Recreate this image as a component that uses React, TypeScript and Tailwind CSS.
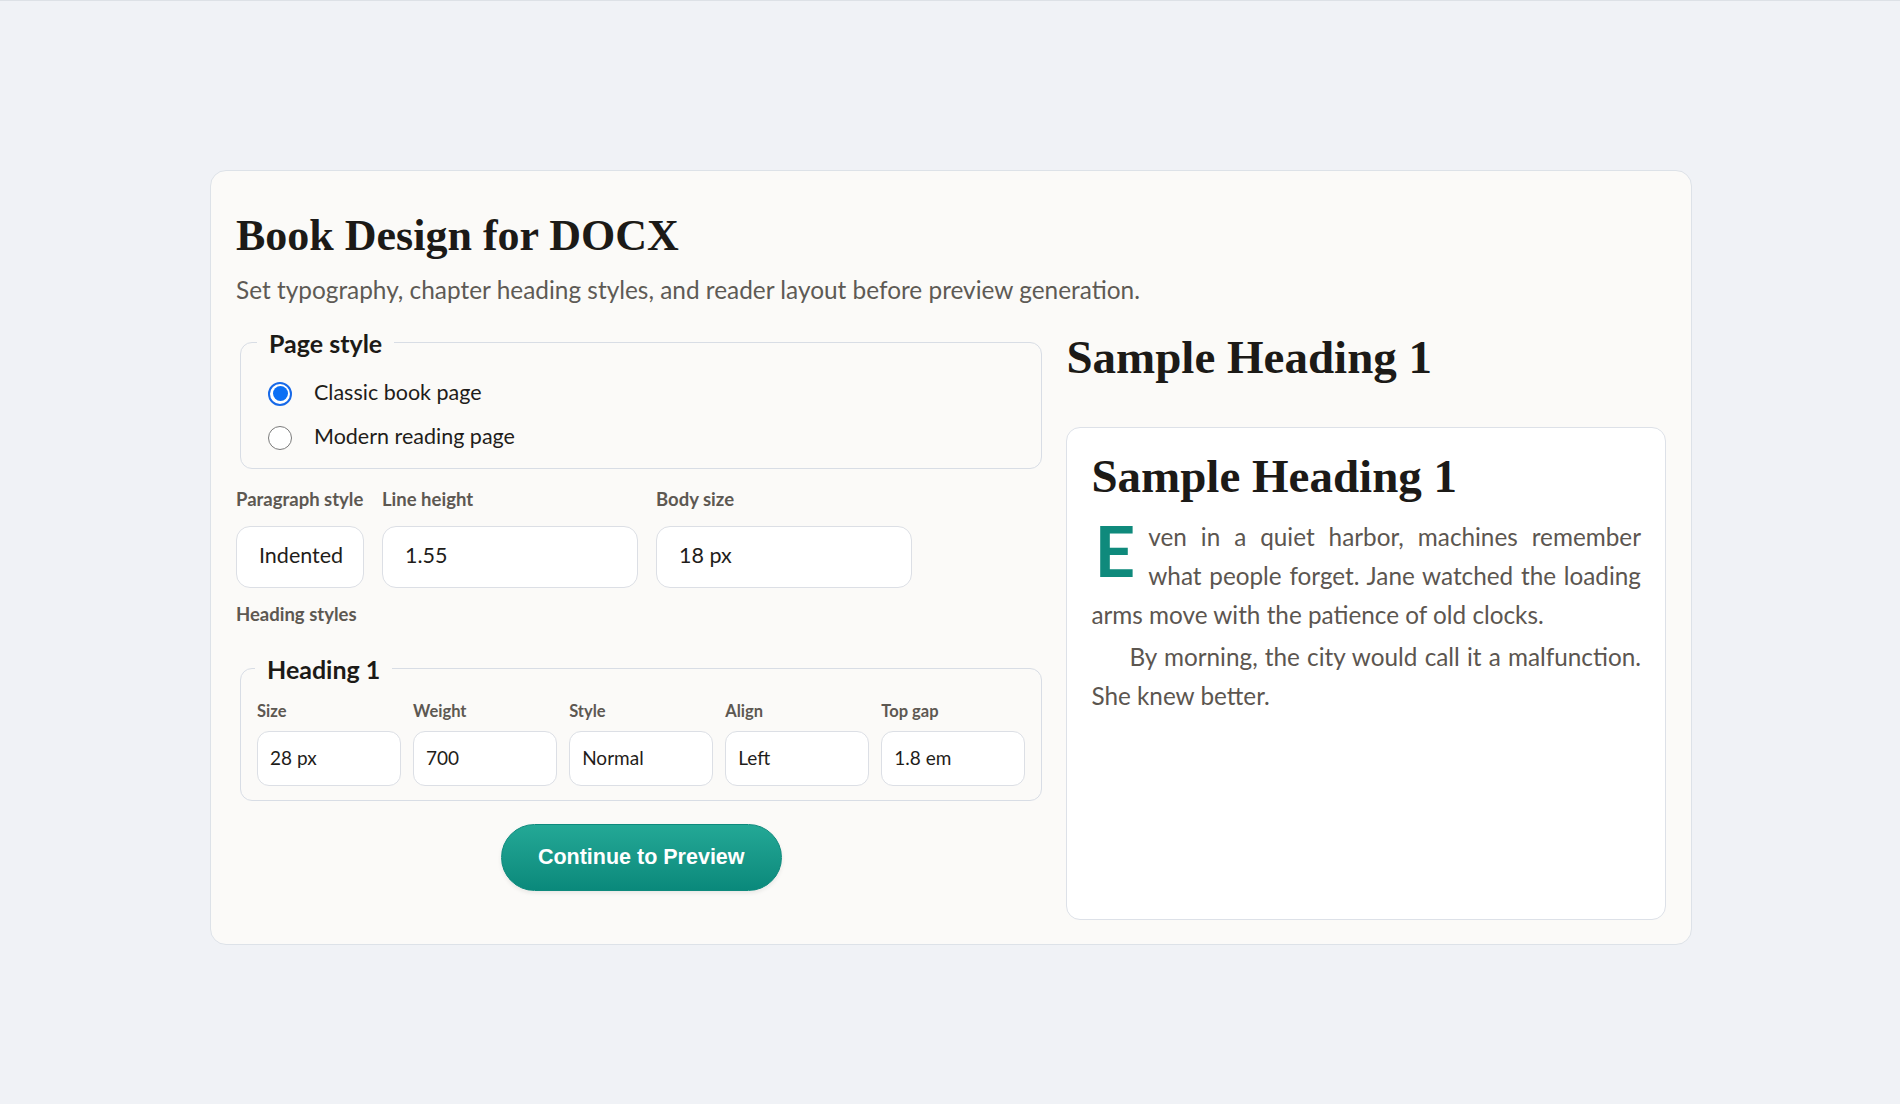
import React from "react";

const Radio = ({ checked, label }: { checked?: boolean; label: string }) => (
  <label className="flex items-center h-11 ml-[11px] gap-[22px] cursor-pointer">
    {checked ? (
      <span className="w-6 h-6 rounded-full border-2 border-[#1769e8] bg-white flex items-center justify-center">
        <span className="w-[15px] h-[15px] rounded-full bg-[#0b6ff4]" />
      </span>
    ) : (
      <span className="w-6 h-6 rounded-full border-[1.5px] border-[#7a7a7a] bg-white" />
    )}
    <span className="-mt-[3px] text-[21.5px] text-[#1f1d1a]">{label}</span>
  </label>
);

const Field = ({ label, value, big }: { label: string; value: string; big?: boolean }) => (
  <div className="flex flex-col">
    <span className={big ? "text-[18.5px] leading-6 font-bold text-[#5d5852]" : "text-[16.5px] leading-[22px] font-bold text-[#5d5852]"}>
      {label}
    </span>
    {big ? (
      <div className="mt-[15px] h-[62px] rounded-[14px] border border-[#dcdfe5] bg-white px-[22px] pb-[3px] flex items-center text-[21.5px] text-[#1f1d1a]">
        {value}
      </div>
    ) : (
      <div className="mt-[9px] h-[55px] rounded-[12px] border border-[#dcdfe5] bg-white px-3 flex items-center text-[19px] text-[#1f1d1a]">
        {value}
      </div>
    )}
  </div>
);

export default function App() {
  return (
    <div className="min-h-screen bg-[#f0f2f6] border-t border-[#dde1e6] pt-[169px] pl-0.5 font-['Lato','Noto_Sans',sans-serif]">
      <div className="mx-auto w-[1482px] rounded-[16px] border border-[#dde2e8] bg-[#fbfaf8] px-[25px] pt-[39px] pb-6">
        <h1 className="font-['Liberation_Serif',serif] font-bold text-[44px] leading-[1.2] text-[#1c1a17]">
          Book Design for DOCX
        </h1>
        <p className="mt-3 text-[24.4px] leading-[30px] text-[#5e5a55]">
          Set typography, chapter heading styles, and reader layout before preview generation.
        </p>

        <div className="mt-6 grid grid-cols-[1.345fr_1fr] gap-6">
          {/* settings */}
          <div className="flex flex-col">
            <fieldset className="ml-1 rounded-[12px] border border-[#d8dde5] px-4 pt-[15px] pb-2">
              <legend className="px-3 text-[25px] leading-7 font-bold text-[#1c1a17]">Page style</legend>
              <Radio checked label="Classic book page" />
              <Radio label="Modern reading page" />
            </fieldset>

            <div className="mt-[18px] grid grid-cols-[128px_256px_256px] gap-x-[18px]">
              <Field big label="Paragraph style" value="Indented" />
              <Field big label="Line height" value="1.55" />
              <Field big label="Body size" value="18 px" />
            </div>

            <span className="mt-[14px] text-[18.5px] leading-6 font-bold text-[#5d5852]">Heading styles</span>

            <fieldset className="ml-1 mt-[28px] rounded-[12px] border border-[#d8dde5] px-4 pt-4 pb-[14px]">
              <legend className="-ml-0.5 px-3 text-[25px] leading-[30px] font-bold text-[#1c1a17]">Heading 1</legend>
              <div className="grid grid-cols-5 gap-3">
                <Field label="Size" value="28 px" />
                <Field label="Weight" value="700" />
                <Field label="Style" value="Normal" />
                <Field label="Align" value="Left" />
                <Field label="Top gap" value="1.8 em" />
              </div>
            </fieldset>

            <div className="ml-1 mt-[23px] mb-[29px] flex justify-center">
              <button className="h-[67px] px-[36px] rounded-full border border-[#0e8a7d] bg-linear-to-b from-[#23a896] to-[#0a897b] text-white text-[21.5px] font-bold font-['Liberation_Sans',Arial,sans-serif] shadow-[0_2px_4px_rgba(0,0,0,0.08)]">
                Continue to Preview
              </button>
            </div>
          </div>

          {/* preview */}
          <div className="flex flex-col">
            <h2 className="font-['Liberation_Serif',serif] font-bold text-[47px] leading-[1.2] text-[#1c1a17]">
              Sample Heading 1
            </h2>
            <div className="mt-[42px] flex-1 rounded-[14px] border border-[#dde1e8] bg-white px-6 pt-5">
              <h3 className="font-['Liberation_Serif',serif] font-bold text-[47px] leading-[1.2] text-[#1c1a17]">
                Sample Heading 1
              </h3>
              <div className="mt-[12px] text-[24.3px] leading-[39px] text-[#5c5650]">
                <p className="text-justify">
                  <span className="float-left mt-[5px] mr-[13px] ml-[3px] text-[71px] leading-[56px] font-bold text-[#0f8a7c]">E</span>
                  ven in a quiet harbor, machines remember what people forget. Jane watched the loading arms move
                  with the patience of old clocks.
                </p>
                <p className="mt-[3px] indent-[38px] text-justify">
                  By morning, the city would call it a malfunction. She knew better.
                </p>
              </div>
            </div>
          </div>
        </div>
      </div>
    </div>
  );
}
